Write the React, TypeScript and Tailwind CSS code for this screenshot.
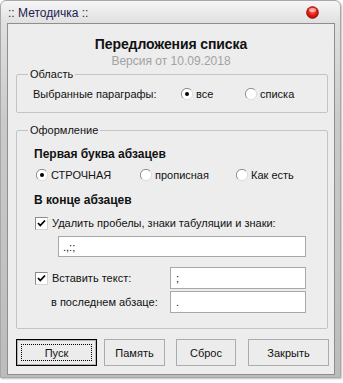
import React from "react";

const font = { fontFamily: '"Liberation Sans", Arial, sans-serif' };

function Radio({ checked }: { checked?: boolean }) {
    return (
        <svg width="12" height="12" viewBox="0 0 12 12" className="shrink-0">
            <circle cx="6" cy="6" r="5.5" fill="#fff" />
            <path d="M10 2 A5.5 5.5 0 0 0 2 10" fill="none" stroke="#8c8c8c" strokeWidth="1" />
            <path d="M2 10 A5.5 5.5 0 0 0 10 2" fill="none" stroke="#dcdcdc" strokeWidth="1" />
            {checked && <circle cx="6" cy="6" r="2" fill="#000" />}
        </svg>
    );
}

function Check() {
    return (
        <div className="w-[13px] h-[13px] shrink-0 bg-white border border-t-[#8a8a8a] border-l-[#8a8a8a] border-r-[#d4d4d4] border-b-[#d4d4d4] flex items-center justify-center">
            <svg width="9" height="9" viewBox="0 0 9 9">
                <path d="M1 4 L3.3 6.5 L8 1.5" fill="none" stroke="#000" strokeWidth="1.8" />
            </svg>
        </div>
    );
}

function Btn({ label, w, ml, isDefault }: { label: string; w: string; ml: string; isDefault?: boolean }) {
    if (isDefault) {
        return (
            <div className={`${w} ${ml} h-[27px] border border-black`}>
                <div className="w-full h-full border border-[#b4b4b4] bg-[#ececec] p-[3px]">
                    <div className="w-full h-full border border-dotted border-black flex items-center justify-center">
                        {label}
                    </div>
                </div>
            </div>
        );
    }
    return (
        <div className={`${w} ${ml} h-[27px] border border-[#acacac] bg-[#ececec] flex items-center justify-center`}>
            {label}
        </div>
    );
}

export default function App() {
    return (
        <div className="w-[343px] h-[383px] bg-white" style={font}>
            <div className="w-[341px] h-[378px] rounded-t-[6px] border border-[#a8a8a8] bg-[linear-gradient(to_bottom,#f6f6f6,#e0e0e0_22px,#cacaca_120px,#bcbcbc)] shadow-[1px_1px_2px_rgba(0,0,0,0.25)] flex flex-col">
                {/* Title bar */}
                <div className="h-[22px] flex items-center pl-[7px] pr-[21px] justify-between">
                    <span className="text-[12px] text-[#1c1c50] mt-[2px]">:: Методичка ::</span>
                    <svg width="13" height="13" viewBox="0 0 13 13" className="mt-[1px]">
                        <defs>
                            <radialGradient id="rg" cx="0.5" cy="0.4" r="0.6">
                                <stop offset="0" stopColor="#ff6a5a" />
                                <stop offset="0.6" stopColor="#e41c10" />
                                <stop offset="1" stopColor="#9a0c06" />
                            </radialGradient>
                        </defs>
                        <circle cx="6.5" cy="6.5" r="6" fill="url(#rg)" stroke="#8a1a10" strokeWidth="0.6" />
                        <ellipse cx="6.5" cy="4" rx="3.5" ry="2" fill="#fff" opacity="0.55" />
                    </svg>
                </div>

                {/* Client area */}
                <div className="ml-[6px] w-[328px] h-[352px] border border-[#8e8e8e] bg-[#ededed] flex flex-col text-[11px] leading-[14px] text-[#111]">
                    <div className="mt-[12px] text-center text-[14px] font-bold leading-[16px] tracking-[-0.1px]">Передложения списка</div>
                    <div className="mt-[2px] text-center text-[12px] text-[#a2a2a2]">Версия от 10.09.2018</div>

                    <fieldset className="ml-[8px] -mt-[1px] w-[312px] border border-[#c4c4c4] rounded-[2px] px-0 pb-[11px]">
                        <legend className="ml-[11px] px-[2px]">Область</legend>
                        <div className="mt-[6px] pl-[16px] flex items-center">
                            <span className="w-[148px]">Выбранные параграфы:</span>
                            <div className="w-[64px] flex items-center gap-[3px]"><Radio checked /><span>все</span></div>
                            <div className="flex items-center gap-[3px]"><Radio /><span>списка</span></div>
                        </div>
                    </fieldset>

                    <fieldset className="ml-[8px] mt-[10px] w-[312px] border border-[#c4c4c4] rounded-[2px] px-0 pb-[15px]">
                        <legend className="ml-[11px] px-[2px]">Оформление</legend>
                        <div className="mt-[10px] pl-[17px] font-bold text-[12px]">Первая буква абзацев</div>
                        <div className="mt-[7px] pl-[19px] flex items-center">
                            <div className="w-[104px] flex items-center gap-[3px]"><Radio checked /><span>СТРОЧНАЯ</span></div>
                            <div className="w-[96px] flex items-center gap-[3px]"><Radio /><span>прописная</span></div>
                            <div className="flex items-center gap-[3px]"><Radio /><span>Как есть</span></div>
                        </div>
                        <div className="mt-[11px] pl-[17px] font-bold text-[12px]">В конце абзацев</div>
                        <div className="mt-[9px] pl-[18px] flex items-center gap-[4px]">
                            <Check />
                            <span>Удалить пробелы, знаки табуляции и знаки:</span>
                        </div>
                        <div className="mt-[6px] ml-[41px] w-[248px] h-[21px] bg-white border border-[#a8a8a8] flex items-center pl-[4px]">.,:;</div>
                        <div className="mt-[10px] pl-[18px] flex items-center">
                            <div className="w-[135px] flex items-center gap-[4px]"><Check /><span>Вставить текст:</span></div>
                            <div className="w-[136px] h-[22px] bg-white border border-[#a8a8a8] flex items-center pl-[5px]">;</div>
                        </div>
                        <div className="mt-[2px] pl-[34px] flex items-center">
                            <span className="w-[119px]">в последнем абзаце:</span>
                            <div className="w-[136px] h-[22px] bg-white border border-[#a8a8a8] flex items-center pl-[5px]">.</div>
                        </div>
                    </fieldset>

                    <div className="mt-[10px] flex">
                        <Btn label="Пуск" w="w-[81px]" ml="ml-[8px]" isDefault />
                        <Btn label="Память" w="w-[61px]" ml="ml-[7px]" />
                        <Btn label="Сброс" w="w-[60px]" ml="ml-[11px]" />
                        <Btn label="Закрыть" w="w-[81px]" ml="ml-[12px]" />
                    </div>
                </div>
            </div>
        </div>
    );
}
